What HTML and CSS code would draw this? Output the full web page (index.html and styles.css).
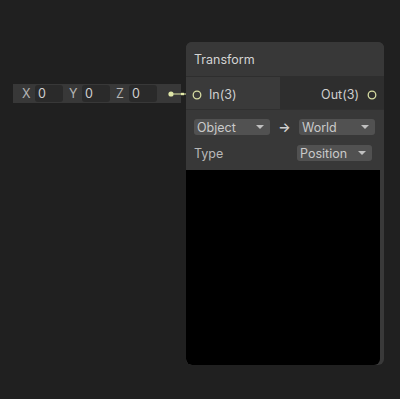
FILE: index.html
```html
<!DOCTYPE html>
<html>
<head>
<meta charset="utf-8">
<link rel="stylesheet" href="styles.css">
</head>
<body>
<div class="canvas">
  <div class="vecbar">
    <span class="lbl">X</span><span class="fld">0</span>
    <span class="lbl">Y</span><span class="fld">0</span>
    <span class="lbl">Z</span><span class="fld">0</span>
  </div>
  <svg class="wire" width="40" height="12" viewBox="0 0 40 12">
    <circle cx="6" cy="6" r="2.6" fill="#dfe6a8"/>
    <line x1="8" y1="6" x2="28" y2="6" stroke="#c9cf98" stroke-width="1.2"/>
    <rect x="16" y="4.8" width="3" height="2.4" fill="#e4eaa8"/>
  </svg>
  <div class="node">
    <div class="title">Transform</div>
    <div class="ports">
      <div class="pin">
        <svg width="10" height="10" viewBox="0 0 10 10"><circle cx="5" cy="5" r="3.8" fill="none" stroke="#d6dca2" stroke-width="1.3"/></svg>
        <span>In(3)</span>
      </div>
      <div class="pout">
        <span>Out(3)</span>
        <svg width="10" height="10" viewBox="0 0 10 10"><circle cx="5" cy="5" r="3.8" fill="none" stroke="#d6dca2" stroke-width="1.3"/></svg>
      </div>
    </div>
    <div class="controls">
      <div class="row">
        <div class="dd w76"><span>Object</span><i class="tri"></i></div>
        <span class="arrow">&#x2192;</span>
        <div class="dd w76"><span>World</span><i class="tri"></i></div>
      </div>
      <div class="row">
        <span class="type">Type</span>
        <div class="dd w75 push"><span>Position</span><i class="tri"></i></div>
      </div>
    </div>
    <div class="preview"></div>
  </div>
</div>
</body>
</html>
```
FILE: styles.css
```css
* { box-sizing: border-box; }
html, body { margin: 0; padding: 0; background: #202020; }
body { font-family: Inter, "Noto Sans", sans-serif; font-size: 12px; color: #c4c4c4; }
.canvas { position: relative; width: 400px; height: 399px; background: #202020; overflow: hidden; }

.vecbar {
  position: absolute; left: 13px; top: 84px; width: 168px; height: 19px;
  background: #383838; display: flex; align-items: center; padding-left: 9px;
}
.lbl { color: #b4b4b4; font-size: 12.5px; width: 13px; }
.fld {
  background: #2a2a2a; width: 28px; height: 17px; border-radius: 3px;
  padding-left: 3px; line-height: 17px; color: #d0d0d0; margin-right: 6px; font-size: 12.5px;
}
.wire { position: absolute; left: 165px; top: 88px; }

.node {
  position: absolute; left: 186px; top: 42px; width: 198px; height: 323px;
  border-radius: 6px; overflow: hidden; background: #393939;
  display: flex; flex-direction: column;
}
.title {
  height: 35px; line-height: 35px; padding-left: 8px; font-size: 12.5px;
  color: #d4d4d4; background: #383838; border-bottom: 1px solid #2e2e2e;
}
.ports { height: 32px; display: flex; font-size: 12.5px; }
.pin {
  width: 94px; background: #3a3a3a; display: flex; align-items: center;
  padding-left: 6px; gap: 7px; color: #cfcfcf; padding-top: 3px;
}
.pout {
  flex: 1; background: #2e2e2e; display: flex; align-items: center;
  justify-content: flex-end; padding-right: 7px; gap: 8px; color: #cfcfcf; padding-top: 3px;
}
.controls {
  height: 61px; background: #383838; padding: 9px 0 0 8px;
  display: flex; flex-direction: column; gap: 10px; border-top: 1px solid #303030;
}
.row { display: flex; align-items: center; height: 16px; }
.dd {
  height: 16px; background: #515151; border-radius: 3px; display: flex;
  align-items: center; justify-content: space-between; padding: 0 6px 0 3px;
  color: #cacaca; font-size: 12.5px;
}
.w76 { width: 76px; }
.w75 { width: 75px; }
.push { margin-left: auto; margin-right: 12px; }
.tri {
  width: 0; height: 0; border-left: 4px solid transparent; border-right: 4px solid transparent;
  border-top: 4px solid #c0c0c0;
}
.arrow { width: 29px; text-align: center; color: #d0d0d0; font-size: 13px; font-weight: 600; }
.type { color: #b8b8b8; font-size: 12.5px; }
.preview {
  flex: 1; width: 194px; background: #000; border-radius: 0 0 6px 6px;
}
```
